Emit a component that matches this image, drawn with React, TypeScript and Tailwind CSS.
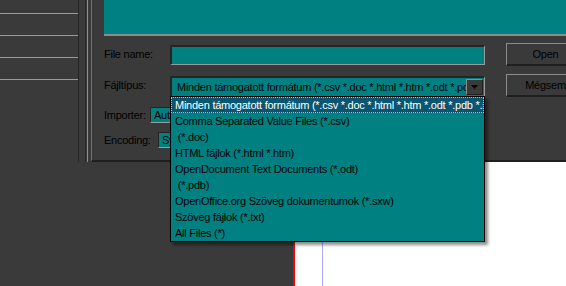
import React from 'react';

const FILE_TYPES = [
  'Minden támogatott formátum (*.csv *.doc *.html *.htm *.odt *.pdb *.sxw *.txt)',
  'Comma Separated Value Files (*.csv)',
  ' (*.doc)',
  'HTML fájlok (*.html *.htm)',
  'OpenDocument Text Documents (*.odt)',
  ' (*.pdb)',
  'OpenOffice.org Szöveg dokumentumok (*.sxw)',
  'Szöveg fájlok (*.txt)',
  'All Files (*)',
];

function Button({ label }: { label: string }) {
  return (
    <div className="w-[80px] shrink-0 flex items-center justify-center border-t border-l border-t-[#8c8c8c] border-l-[#8c8c8c] border-b-2 border-r-2 border-b-[#1f1f1f] border-r-[#1f1f1f] text-black">
      {label}
    </div>
  );
}

export default function App() {
  return (
    <div
      className="relative w-[566px] h-[286px] overflow-hidden bg-[#3a3a3a] text-[11px] leading-none tracking-[-0.25px] text-black"
      style={{ fontFamily: '"Liberation Sans", Arial, sans-serif' }}
    >
      {/* top: side panel + dialog */}
      <div className="flex h-[162px]">
        <div className="w-[79px] shrink-0 border-r border-[#262626]">
          <div className="h-[14px] border-b border-[#9a9a9a]" />
          <div className="h-[22px] border-b border-[#9a9a9a]" />
          <div className="h-[22px] border-b border-[#9a9a9a]" />
          <div className="h-[22px] border-b border-[#9a9a9a]" />
        </div>
        <div className="w-[7px] shrink-0 border-r border-[#262626]" />
        <div className="w-[2px] shrink-0 border-r border-[#8c8c8c]" />
        <div className="w-[3px] shrink-0" />

        <div className="flex-1 min-w-0 flex flex-col border-l border-[#6e6e6e] border-b-2 border-b-[#1f1f1f] pl-[12px]">
          <div className="h-[36px] shrink-0 bg-[#008080] border-b-2 border-[#8c8c8c]" />

          {/* File name */}
          <div className="flex mt-[7px] h-[23px]">
            <div className="w-[66px] shrink-0 flex items-center">File name:</div>
            <div className="w-[315px] shrink-0 h-[20px] mt-[2px] bg-[#008080] border-t-2 border-l-2 border-[#242424] border-b border-r border-b-[#9a9a9a] border-r-[#9a9a9a]" />
            <div className="w-[21px] shrink-0" />
            <Button label="Open" />
          </div>

          {/* File type */}
          <div className="flex mt-[8px] h-[23px]">
            <div className="w-[66px] shrink-0 flex items-center">Fájltípus:</div>
            <div className="w-[315px] shrink-0 h-[21px] mt-[2px] flex items-center bg-[#008080] border-t-2 border-l-2 border-[#242424] border-b border-r border-b-[#9a9a9a] border-r-[#9a9a9a] pl-[5px] pr-[1px]">
              <span className="flex-1 min-w-0 overflow-hidden whitespace-nowrap">
                Minden támogatott formátum (*.csv *.doc *.html *.htm *.odt *.pdb *.sxw *.txt)
              </span>
              <div className="w-[17px] h-[16px] shrink-0 flex items-center justify-center bg-[#3a3a3a] border-t border-l border-[#8c8c8c] border-b border-r border-b-[#1f1f1f] border-r-[#1f1f1f]">
                <svg width="7" height="4" viewBox="0 0 7 4">
                  <polygon points="0,0 7,0 3.5,4" fill="#000" />
                </svg>
              </div>
            </div>
            <div className="w-[21px] shrink-0" />
            <Button label="Mégsem" />
          </div>

          {/* Importer */}
          <div className="flex mt-[10px] h-[16px] items-center">
            <div className="w-[46px] shrink-0">Importer:</div>
            <div className="w-[200px] shrink-0 h-[16px] flex items-center bg-[#008080] border-t border-l border-[#242424] border-b border-r border-b-[#9a9a9a] border-r-[#9a9a9a] pl-[3px]">
              Auto
            </div>
          </div>

          {/* Encoding */}
          <div className="flex mt-[9px] h-[16px] items-center">
            <div className="w-[54px] shrink-0">Encoding:</div>
            <div className="w-[200px] shrink-0 h-[16px] flex items-center bg-[#008080] border-t border-l border-[#242424] border-b border-r border-b-[#9a9a9a] border-r-[#9a9a9a] pl-[3px]">
              System
            </div>
          </div>
        </div>
      </div>

      {/* bottom: page canvas */}
      <div className="flex h-[124px]">
        <div className="w-[293px] shrink-0" />
        <div className="w-[2px] shrink-0 bg-[#ff0000]" />
        <div className="flex-1 bg-white flex">
          <div className="w-[27px] shrink-0" />
          <div className="w-[1px] shrink-0 bg-[#a8a8ff]" />
        </div>
      </div>

      {/* open dropdown list */}
      <div className="absolute left-[170px] top-[96px] w-[315px] bg-[#008080] border border-black shadow-[3px_3px_3px_rgba(0,0,0,0.45)]">
        {FILE_TYPES.map((t, i) => (
          <div
            key={i}
            className={
              i === 0
                ? 'h-[16px] flex items-center whitespace-pre overflow-hidden pl-[3px] bg-[#0a5670] text-white border border-dotted border-[#f2a58a]'
                : 'h-[16px] flex items-center whitespace-pre overflow-hidden pl-[4px]'
            }
          >
            {t}
          </div>
        ))}
      </div>
    </div>
  );
}
